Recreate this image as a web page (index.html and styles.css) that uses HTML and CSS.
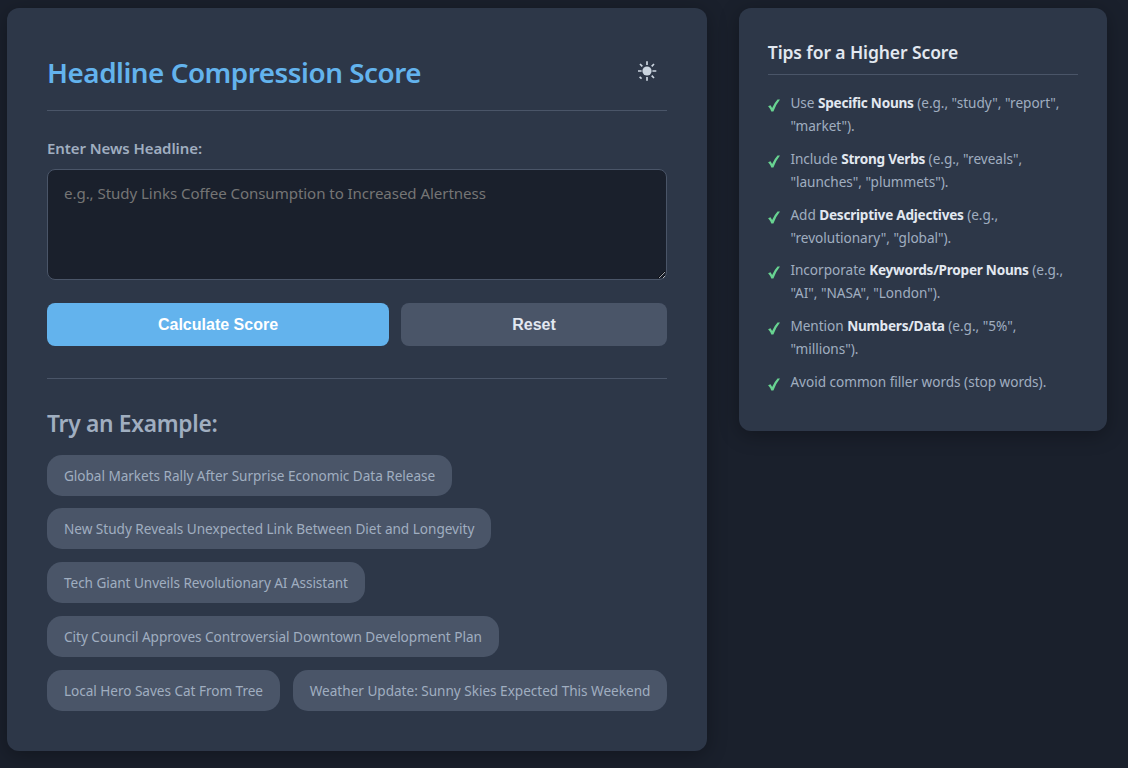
FILE: index.html
```html
<!DOCTYPE html>
<html lang="en">
<head>
<meta charset="utf-8">
<title>Headline Compression Score</title>
<link rel="stylesheet" href="styles.css">
</head>
<body>
<svg width="0" height="0" class="defs"><symbol id="check" viewBox="0 0 12 13"><path d="M.1 7.3L2.500 6.300Q3.300 7.400 4.100 8.900Q6.200 4 9.500.4H12Q8 5.200 5.400 12.500H3.300Q2 9.200.1 7.300Z"/></symbol></svg>
<div class="layout">
  <main class="card main-card">
    <header class="header">
      <h1 class="title">Headline Compression Score</h1>
      <button class="theme-toggle" aria-label="Toggle theme">
        <svg class="sun" viewBox="0 0 20 20">
          <circle cx="10" cy="10" r="4.6"/>
          <path d="M10 .3v3.700M10 16v3.700M1 10h3.600M15.400 10h3.900M3 3l2.300 2.300M17 3l-2.300 2.300M2.600 15.800l2 1.800M14.700 14.700l2.300 2.300"/>
        </svg>
      </button>
    </header>
    <label class="label" for="headline">Enter News Headline:</label>
    <textarea class="input" id="headline" placeholder="e.g., Study Links Coffee Consumption to Increased Alertness"></textarea>
    <div class="actions">
      <button class="btn btn-primary">Calculate Score</button>
      <button class="btn btn-secondary">Reset</button>
    </div>
    <section class="examples">
      <h2 class="examples-title">Try an Example:</h2>
      <div class="chips">
        <span class="chip">Global Markets Rally After Surprise Economic Data Release</span>
        <span class="chip chip-wide">New Study Reveals Unexpected Link Between Diet and Longevity</span>
        <span class="chip chip-narrow">Tech Giant Unveils Revolutionary AI Assistant</span>
        <span class="chip chip-wide">City Council Approves Controversial Downtown Development Plan</span>
        <span class="chip">Local Hero Saves Cat From Tree</span>
        <span class="chip chip-wide">Weather Update: Sunny Skies Expected This Weekend</span>
      </div>
    </section>
  </main>
  <aside class="card tips">
    <h3 class="tips-title">Tips for a Higher Score</h3>
    <ul class="tips-list">
      <li class="tip"><svg class="check"><use href="#check"/></svg><span>Use <strong>Specific Nouns</strong> (e.g., "study", "report",<br>"market").</span></li>
      <li class="tip"><svg class="check"><use href="#check"/></svg><span>Include <strong>Strong Verbs</strong> (e.g., "reveals",<br>"launches", "plummets").</span></li>
      <li class="tip"><svg class="check"><use href="#check"/></svg><span>Add <strong>Descriptive Adjectives</strong> (e.g.,<br>"revolutionary", "global").</span></li>
      <li class="tip"><svg class="check"><use href="#check"/></svg><span>Incorporate <strong>Keywords/Proper Nouns</strong> (e.g.,<br>"AI", "NASA", "London").</span></li>
      <li class="tip"><svg class="check"><use href="#check"/></svg><span>Mention <strong>Numbers/Data</strong> (e.g., "5%",<br>"millions").</span></li>
      <li class="tip"><svg class="check"><use href="#check"/></svg><span>Avoid common filler words (stop words).</span></li>
    </ul>
  </aside>
</div>
</body>
</html>
```
FILE: styles.css
```css
* { box-sizing: border-box; }
body {
  margin: 0;
  height: 768px;
  overflow: hidden;
  background: #1a202c;
  color: #e2e8f0;
  font-family: "Noto Sans", sans-serif;
  line-height: 1.6;
}
h1, h2, h3 { margin: 0; font-weight: 600; }
.defs { display: block; }
.layout {
  display: flex;
  align-items: flex-start;
  gap: 32px;
  padding: 8px 0 0 7px;
}
.card {
  background: #2d3748;
  border-radius: 12px;
  box-shadow: 0 4px 20px rgba(0, 0, 0, .3);
}
.main-card { width: 700px; height: 743px; padding: 40px; }
.header {
  display: flex;
  justify-content: space-between;
  align-items: center;
  height: 63px;
  padding-bottom: 14px;
  border-bottom: 1px solid #4a5568;
}
.title { font-size: 27.8px; line-height: 46px; letter-spacing: -.47px; color: #63b3ed; }
.theme-toggle {
  display: flex;
  width: 40px;
  height: 40px;
  padding: 0;
  align-items: center;
  justify-content: center;
  border: 0;
  background: none;
}
.sun { width: 20px; height: 20px; margin-bottom: 2px; fill: #cbd5e0; stroke: #cbd5e0; stroke-width: 1.7; }
.sun circle { stroke: none; }
.label {
  display: block;
  margin: 25px 0 8px;
  font-size: 15px;
  line-height: 25px;
  font-weight: 600;
  letter-spacing: -.08px;
  color: #a0aec0;
}
.input {
  display: block;
  width: 100%;
  height: 111px;
  padding: 11px 16px;
  border: 1px solid #4a5568;
  border-radius: 8px;
  background: #1a202c;
  color: #e2e8f0;
  font: 15.1px/24px "Noto Sans", sans-serif;
  letter-spacing: -.07px;
  resize: vertical;
}
.input::placeholder { color: #757575; }
.actions { display: flex; gap: 12px; margin-top: 23px; }
.btn {
  height: 43px;
  border: 0;
  border-radius: 8px;
  font: bold 16px "Liberation Sans", Arial, sans-serif;
}
.btn-primary { width: 342px; background: #63b3ed; color: #fff; }
.btn-secondary { width: 266px; background: #4a5568; color: #e2e8f0; }
.examples { margin-top: 32px; padding-top: 26px; border-top: 1px solid #4a5568; }
.examples-title { font-size: 22.8px; line-height: 38px; letter-spacing: -.3px; color: #a0aec0; }
.chips { display: flex; flex-wrap: wrap; gap: 12.8px; margin: 11.6px -4px 0 0; }
.chip {
  height: 41.04px;
  padding: 9px 17px;
  border-radius: 15px;
  background: #4a5568;
  color: #a0aec0;
  font-size: 13.6px;
  line-height: 23px;
  letter-spacing: -.04px;
  white-space: nowrap;
}
.chip-wide { letter-spacing: -.02px; }
.chip-narrow { letter-spacing: -.06px; }
.tips { width: 368px; height: 423px; padding: 28.8px; }
.tips-title {
  padding-top: 1px;
  padding-bottom: 7px;
  border-bottom: 1px solid #4a5568;
  font-size: 17.5px;
  line-height: 29.4px;
  letter-spacing: -.1px;
}
.tips-list { margin: 16px 0 0; padding: 0; list-style: none; }
.tip {
  display: flex;
  gap: 10.6px;
  margin-bottom: 9.6px;
  color: #a0aec0;
  font-size: 13.6px;
  line-height: 23.04px;
  letter-spacing: -.02px;
  white-space: nowrap;
}
.tip strong { color: #e2e8f0; letter-spacing: -.25px; }
.check { flex: none; width: 12px; height: 13px; margin-top: 8px; fill: #68d391; }
```
